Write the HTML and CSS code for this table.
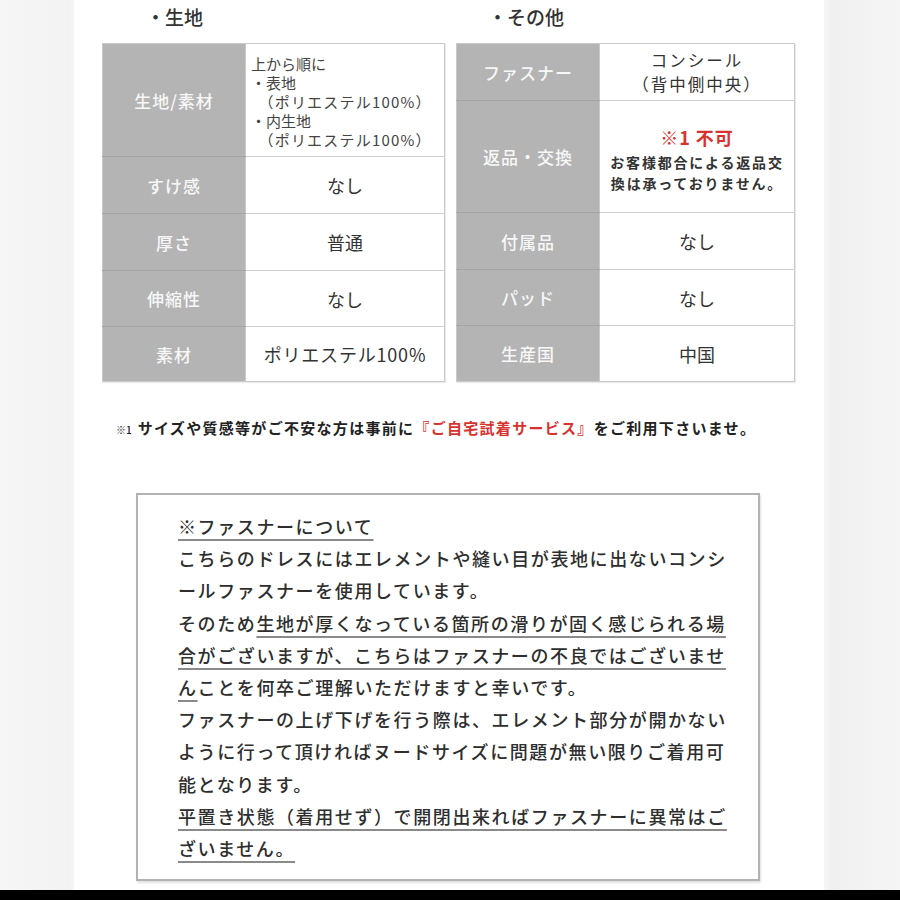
FILE: index.html
```html
<!DOCTYPE html>
<html lang="ja">
<head>
<meta charset="utf-8">
<link rel="stylesheet" href="styles.css">
</head>
<body>
<div class="page">
  <div class="tables">
    <div class="col">
      <div class="heading heading-left">・生地</div>
      <table class="spec">
        <tr class="h113"><th>生地/素材</th><td class="list">上から順に<br>・表地<br>　<span class="paren">（ポリエステル100%）</span><br>・内生地<br>　<span class="paren">（ポリエステル100%）</span></td></tr>
        <tr class="h57"><th>すけ感</th><td>なし</td></tr>
        <tr class="h57"><th>厚さ</th><td>普通</td></tr>
        <tr class="h56"><th>伸縮性</th><td>なし</td></tr>
        <tr class="h55"><th>素材</th><td class="wide">ポリエステル100%</td></tr>
      </table>
    </div>
    <div class="col">
      <div class="heading heading-right">・その他</div>
      <table class="spec">
        <tr class="h57"><th>ファスナー</th><td class="two"><div class="two-line">コンシール</div><div class="two-line">（背中側中央）</div></td></tr>
        <tr class="h112"><th>返品・交換</th><td><div class="red">※1 不可</div><div class="note">お客様都合による返品交<br>換は承っておりません。</div></td></tr>
        <tr class="h57"><th>付属品</th><td>なし</td></tr>
        <tr class="h56"><th>パッド</th><td>なし</td></tr>
        <tr class="h56"><th>生産国</th><td>中国</td></tr>
      </table>
    </div>
  </div>
  <p class="footnote"><span class="mark">※1</span>サイズや質感等がご不安な方は事前に<span class="service">『ご自宅試着サービス』</span>をご利用下さいませ。</p>
  <div class="box">
    <div class="line"><span class="ul">※ファスナーについて</span></div>
    <div class="line">こちらのドレスにはエレメントや縫い目が表地に出ないコンシ</div>
    <div class="line">ールファスナーを使用しています。</div>
    <div class="line">そのため<span class="ul">生地が厚くなっている箇所の滑りが固く感じられる場</span></div>
    <div class="line"><span class="ul">合がございますが、こちらはファスナーの不良ではございませ</span></div>
    <div class="line"><span class="ul">ん</span>ことを何卒ご理解いただけますと幸いです。</div>
    <div class="line">ファスナーの上げ下げを行う際は、エレメント部分が開かない</div>
    <div class="line">ように行って頂ければヌードサイズに問題が無い限りご着用可</div>
    <div class="line">能となります。</div>
    <div class="line"><span class="ul">平置き状態（着用せず）で開閉出来ればファスナーに異常はご</span></div>
    <div class="line"><span class="ul">ざいません。</span></div>
  </div>
</div>
<div class="bottom-bar"></div>
</body>
</html>
```

FILE: styles.css
```css
html, body {
  margin: 0;
  padding: 0;
}
body {
  width: 900px;
  height: 900px;
  overflow: hidden;
  background: linear-gradient(to right, #f6f6f6 0, #f2f2f2 70px, #f6f6f6 74px, #f6f6f6 826px, #f0f0f0 832px, #f5f5f5 900px);
  font-family: "Noto Sans CJK JP", "Noto Sans", sans-serif;
  color: #333;
  position: relative;
}
.page {
  width: 750px;
  height: 890px;
  margin: 0 0 0 74px;
  background: #fff;
  box-sizing: border-box;
}
.tables {
  display: grid;
  grid-template-columns: 343px 339px;
  column-gap: 11px;
  margin-left: 28px;
}
.heading {
  height: 43px;
  line-height: 34px;
  font-size: 19px;
  font-weight: 500;
  color: #333;
}
.heading-left { padding-left: 44px; }
.heading-right { padding-left: 32px; }
.spec {
  border-collapse: collapse;
  width: 100%;
  table-layout: fixed;
  border: 1px solid #c9c9c9;
  box-shadow: 1px 1px 1px rgba(0,0,0,0.08);
}
.spec th {
  width: 142px;
  background: #b4b4b4;
  color: #f7f7f7;
  font-weight: 500;
  font-size: 17px;
  letter-spacing: 1px;
  border-bottom: 1px solid #a4a4a4;
  border-right: 1px solid #c9c9c9;
  padding: 0;
  text-align: center;
  vertical-align: middle;
}
.spec td {
  background: #fff;
  border-bottom: 1px solid #cfcfcf;
  font-size: 18px;
  color: #333;
  text-align: center;
  vertical-align: middle;
  padding: 0;
}
.spec tr:last-child th,
.spec tr:last-child td { border-bottom: none; }
.h113 { height: 113px; }
.h112 { height: 112px; }
.h57 { height: 57px; }
.h56 { height: 56px; }
.h55 { height: 55px; }
.spec td.list {
  text-align: left;
  font-size: 15px;
  line-height: 19px;
  padding: 2px 0 0 5px;
  color: #444;
}
.paren { letter-spacing: 1.2px; }
.spec td.wide { letter-spacing: 0.8px; }
.spec td.two {
  font-size: 16.5px;
  letter-spacing: 2px;
}
.two-line {
  height: 24px;
  line-height: 24px;
}
.red {
  color: #d8322f;
  font-weight: 700;
  font-size: 18px;
  line-height: 26px;
  letter-spacing: 1px;
  margin-top: 4px;
}
.note {
  font-size: 14px;
  font-weight: 700;
  line-height: 21px;
  letter-spacing: 1.8px;
  color: #333;
  margin-top: 2px;
}
.footnote {
  margin: 34px 0 0 42px;
  height: 24px;
  line-height: 24px;
  font-size: 15px;
  font-weight: 700;
  letter-spacing: 1.3px;
  color: #222;
}
.mark {
  font-size: 10px;
  font-weight: 500;
  margin-right: 6px;
  letter-spacing: 0;
}
.service { color: #d8322f; }
.box {
  margin: 53px 0 0 62px;
  width: 624px;
  height: 388px;
  box-sizing: border-box;
  border: 2px solid #b2b2b2;
  box-shadow: 1px 2px 2px rgba(0,0,0,0.12);
  padding: 15px 0 15px 40px;
  font-size: 18px;
  font-weight: 500;
  letter-spacing: 1.6px;
  color: #2e2e2e;
}
.line {
  height: 32.2px;
  line-height: 32.2px;
  white-space: nowrap;
}
.ul {
  text-decoration: underline;
  text-decoration-color: #8a8a8a;
  text-decoration-thickness: 2px;
  text-underline-offset: 5px;
}
.bottom-bar {
  position: absolute;
  left: 0;
  top: 890px;
  width: 900px;
  height: 10px;
  background: #000;
}
```
